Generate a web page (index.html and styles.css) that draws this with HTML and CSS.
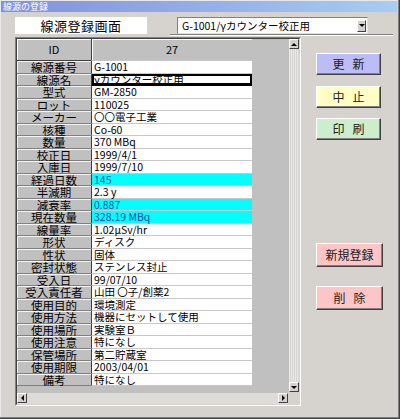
FILE: index.html
```html
<!DOCTYPE html>
<html lang="ja">
<head>
<meta charset="utf-8">
<title>線源の登録</title>
<link rel="stylesheet" href="styles.css">
</head>
<body>
<div class="window">
  <div class="titlebar">線源の登録</div>
  <div class="header">
    <div class="caption">線源登録画面</div>
    <div class="combo-wrap">
      <div class="combo">
        <span class="combo-text">G-1001/γカウンター校正用</span>
        <span class="drop"><span class="tri-down"></span></span>
      </div>
    </div>
  </div>
  <div class="main">
    <div class="frame">
      <div class="frame-inner">
        <div class="viewport">
          <div class="table">
            <div class="hcell">ID</div><div class="hcell val">27</div>
            <div class="lbl">線源番号</div><div class="val">G-1001</div>
            <div class="lbl">線源名</div><div class="val focus">γカウンター校正用</div>
            <div class="lbl">型式</div><div class="val">GM-2850</div>
            <div class="lbl">ロット</div><div class="val">110025</div>
            <div class="lbl">メーカー</div><div class="val">〇〇電子工業</div>
            <div class="lbl">核種</div><div class="val">Co-60</div>
            <div class="lbl">数量</div><div class="val">370 MBq</div>
            <div class="lbl">校正日</div><div class="val">1999/4/1</div>
            <div class="lbl">入庫日</div><div class="val">1999/7/10</div>
            <div class="lbl">経過日数</div><div class="val calc">145</div>
            <div class="lbl">半減期</div><div class="val">2.3 y</div>
            <div class="lbl">減衰率</div><div class="val calc">0.887</div>
            <div class="lbl">現在数量</div><div class="val calc">328.19 MBq</div>
            <div class="lbl">線量率</div><div class="val">1.02μSv/hr</div>
            <div class="lbl">形状</div><div class="val">ディスク</div>
            <div class="lbl">性状</div><div class="val">固体</div>
            <div class="lbl">密封状態</div><div class="val">ステンレス封止</div>
            <div class="lbl">受入日</div><div class="val">99/07/10</div>
            <div class="lbl">受入責任者</div><div class="val">山田 〇子/創薬2</div>
            <div class="lbl">使用目的</div><div class="val">環境測定</div>
            <div class="lbl">使用方法</div><div class="val">機器にセットして使用</div>
            <div class="lbl">使用場所</div><div class="val">実験室Ｂ</div>
            <div class="lbl">使用注意</div><div class="val">特になし</div>
            <div class="lbl">保管場所</div><div class="val">第二貯蔵室</div>
            <div class="lbl">使用期限</div><div class="val">2003/04/01</div>
            <div class="lbl">備考</div><div class="val">特になし</div>
          </div>
        </div>
        <div class="vscroll">
          <span class="sbtn"><span class="tri-up"></span></span>
          <span class="track-v"></span>
          <span class="sbtn"><span class="tri-down"></span></span>
        </div>
        <div class="hscroll">
          <span class="sbtn"><span class="tri-left"></span></span>
          <span class="track-h"></span>
          <span class="sbtn"><span class="tri-right"></span></span>
        </div>
        <div class="corner"></div>
      </div>
    </div>
    <div class="buttons">
      <div class="btn b-update"><span>更</span><span>新</span></div>
      <div class="btn b-cancel"><span>中</span><span>止</span></div>
      <div class="btn b-print"><span>印</span><span>刷</span></div>
      <div class="btn b-new"><span>新規登録</span></div>
      <div class="btn b-del"><span>削</span><span>除</span></div>
    </div>
  </div>
</div>
</body>
</html>
```

FILE: styles.css
```css
* { box-sizing: border-box; }
html, body { margin: 0; padding: 0; background: #d6d3ce; }
body { font-family: "Noto Sans CJK JP", "DejaVu Sans", sans-serif; color: #000; }

.window {
  width: 400px;
  height: 419px;
  background: #d6d3ce;
  padding: 1px 4px 4px 1px;
  box-shadow: inset -1px -1px 0 #404040, inset -2px -2px 0 #808080, inset 1px 1px 0 #e8e8e8;
  overflow: hidden;
}

.titlebar {
  height: 11px;
  width: 396px;
  background: linear-gradient(90deg, #8190dc 0%, #98b4ea 60%, #a8ccf2 100%);
  color: #fff;
  font-size: 9px;
  line-height: 11px;
  padding-left: 2px;
  white-space: nowrap;
}

.header {
  display: flex;
  align-items: flex-start;
  margin-top: 5px;
  padding-left: 14px;
}
.caption {
  width: 132px;
  height: 17px;
  background: #fff;
  font-size: 13px;
  line-height: 17px;
  text-align: center;
  letter-spacing: 0.5px;
}
.combo-wrap {
  margin-left: 23px;
  width: 223px;
  padding-left: 7px;
  border-bottom: 1px solid #808080;
  box-shadow: 0 1px 0 #fff;
  height: 18px;
}
.combo {
  display: flex;
  align-items: center;
  width: 191px;
  height: 17px;
  background: #fff;
  border: 1px solid;
  border-color: #808080 #e0e0e0 #e0e0e0 #808080;
  padding-left: 4px;
  padding-right: 1px;
}
.combo-text {
  flex: 1;
  font-size: 10.5px;
  line-height: 14px;
  white-space: nowrap;
}
.drop {
  width: 9px;
  height: 12px;
  background: #d6d3ce;
  border: 1px solid;
  border-color: #fff #404040 #404040 #fff;
  display: flex;
  align-items: center;
  justify-content: center;
}

.tri-down, .tri-up, .tri-left, .tri-right { width: 0; height: 0; display: block; }
.tri-down { border-left: 3px solid transparent; border-right: 3px solid transparent; border-top: 3px solid #000; }
.tri-up { border-left: 3px solid transparent; border-right: 3px solid transparent; border-bottom: 3px solid #000; }
.tri-left { border-top: 3px solid transparent; border-bottom: 3px solid transparent; border-right: 3px solid #000; }
.tri-right { border-top: 3px solid transparent; border-bottom: 3px solid transparent; border-left: 3px solid #000; }

.main {
  display: flex;
  align-items: flex-start;
  margin-top: 2px;
  padding-left: 14px;
}

.frame {
  width: 286px;
  height: 369px;
  border: 1px solid;
  border-color: #808080 #fff #fff #808080;
}
.frame-inner {
  width: 100%;
  height: 100%;
  border: 1px solid;
  border-color: #404040 #d6d3ce #d6d3ce #404040;
  display: grid;
  grid-template-columns: 1fr 11px;
  grid-template-rows: 1fr 12px;
}
.viewport {
  background: #c0c0c0;
  overflow: hidden;
}
.table {
  display: grid;
  grid-template-columns: 74px 161px;
  grid-template-rows: 22px;
  grid-auto-rows: 12.5px;
  width: 235px;
  border-right: 1px solid #404040;
}
.hcell {
  background: #c0c0c0;
  border-bottom: 1px solid #404040;
  box-shadow: inset 1px 1px 0 #fff;
  font-size: 11px;
  line-height: 21px;
  text-align: center;
}
.hcell.val {
  background: #c0c0c0;
  border-left: 1px solid #404040;
  padding-left: 0;
  font-size: 11px;
  line-height: 21px;
}
.lbl {
  background: #c0c0c0;
  border-bottom: 1px solid #808080;
  box-shadow: inset 1px 1px 0 #f4f4f4;
  font-size: 11.5px;
  line-height: 12px;
  text-align: center;
  white-space: nowrap;
}
.val {
  background: #fff;
  border-left: 1px solid #404040;
  border-bottom: 1px solid #c8c8c8;
  font-size: 10.5px;
  line-height: 12px;
  padding-left: 2px;
  white-space: nowrap;
}
.val.calc { background: #00ffff; color: #1f3fb0; }
.val.focus { box-shadow: inset 0 0 0 2px #000; border-bottom-color: #000; }

.vscroll {
  display: flex;
  flex-direction: column;
  background: #e4e2de;
  border-left: 1px solid #c0c0c0;
}
.hscroll {
  display: flex;
  background: #e4e2de;
  border-top: 1px solid #c0c0c0;
}
.track-v { flex: 1; background: repeating-linear-gradient(90deg, #e8e6e2 0 1px, #d8d6d2 1px 2px); }
.track-h { flex: 1; background: #dedcd8; }
.sbtn {
  width: 10px;
  height: 10px;
  flex: none;
  background: #d6d3ce;
  border: 1px solid;
  border-color: #fff #404040 #404040 #fff;
  display: flex;
  align-items: center;
  justify-content: center;
}
.corner { background: #d6d3ce; }

.buttons {
  display: flex;
  flex-direction: column;
  align-items: flex-start;
  margin-left: 15px;
  padding-top: 16px;
}
.btn {
  display: flex;
  justify-content: center;
  align-items: center;
  gap: 8px;
  width: 65px;
  height: 22px;
  border: 1px solid;
  border-color: #fff #404040 #404040 #fff;
  box-shadow: inset -1px -1px 0 #808080;
  font-size: 12px;
  line-height: 16px;
  color: #202020;
  white-space: nowrap;
}
.b-update { background: #bcbcf6; }
.b-cancel { background: #ffffc4; margin-top: 11px; }
.b-print { background: #cdeecd; margin-top: 10px; }
.b-new { background: #fcc6c6; margin-top: 103px; width: 67px; height: 24px; }
.b-del { background: #fcc6c6; margin-top: 19px; width: 67px; height: 24px; }
```
